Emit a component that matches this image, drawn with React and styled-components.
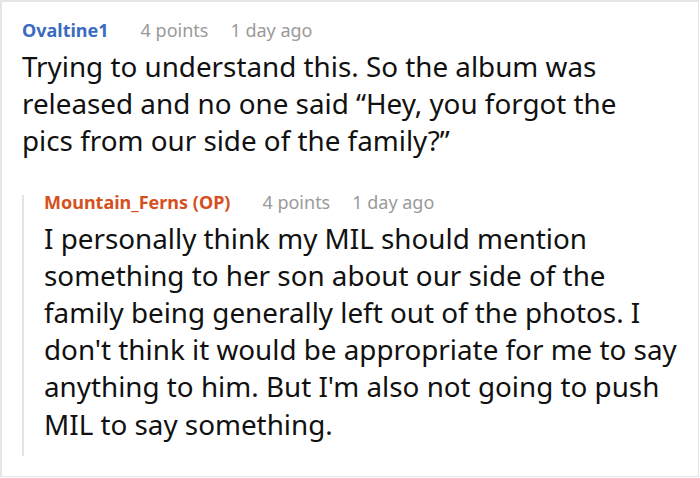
import React from 'react';
import styled, { createGlobalStyle } from 'styled-components';

const GlobalStyle = createGlobalStyle`
  html, body {
    margin: 0;
    padding: 0;
    background: #ffffff;
  }
  body {
    font-family: "Noto Sans", "Open Sans", sans-serif;
    color: #111111;
  }
`;

const Frame = styled.div`
  box-sizing: border-box;
  width: 699px;
  height: 477px;
  border: 2px solid #e6e6e6;
  border-right-width: 1px;
  border-bottom-width: 1px;
  padding: 16px 16px 0 20px;
  overflow: hidden;
`;

const Meta = styled.div`
  display: flex;
  align-items: baseline;
  font-size: 18px;
  line-height: ${p => (p.$tight ? '14px' : '24px')};
`;

const Author = styled.span`
  font-weight: 700;
  color: ${p => p.$color};
  margin-right: 32px;
`;

const Dim = styled.span`
  color: #9a9a9a;
  & + & {
    margin-left: 22px;
  }
`;

const Body = styled.p`
  margin: ${p => p.$top}px 0 0 0;
  font-size: 27.8px;
  line-height: 37.2px;
  white-space: nowrap;
`;

const Line = styled.span`
  display: block;
`;

const Reply = styled.div`
  margin-top: 35px;
  border-left: 2px solid #e4e4e4;
  padding: 0 0 13px 20px;
`;

const Comment = ({ author, color, points, age, lines, tight, top }) => (
  <>
    <Meta $tight={tight}>
      <Author $color={color}>{author}</Author>
      <Dim>{points}</Dim>
      <Dim>{age}</Dim>
    </Meta>
    <Body $top={top}>
      {lines.map((l, i) => (
        <Line key={i}>{l}</Line>
      ))}
    </Body>
  </>
);

export default function App() {
  return (
    <>
      <GlobalStyle />
      <Frame>
        <Comment
          author="Ovaltine1"
          color="#3b6bc0"
          points="4 points"
          age="1 day ago"
          top={6}
          lines={[
            'Trying to understand this. So the album was',
            'released and no one said “Hey, you forgot the',
            'pics from our side of the family?”',
          ]}
        />
        <Reply>
          <Comment
            author="Mountain_Ferns (OP)"
            color="#d6501e"
            points="4 points"
            age="1 day ago"
            tight
            top={11}
            lines={[
              'I personally think my MIL should mention',
              'something to her son about our side of the',
              'family being generally left out of the photos. I',
              "don't think it would be appropriate for me to say",
              "anything to him. But I'm also not going to push",
              'MIL to say something.',
            ]}
          />
        </Reply>
      </Frame>
    </>
  );
}
